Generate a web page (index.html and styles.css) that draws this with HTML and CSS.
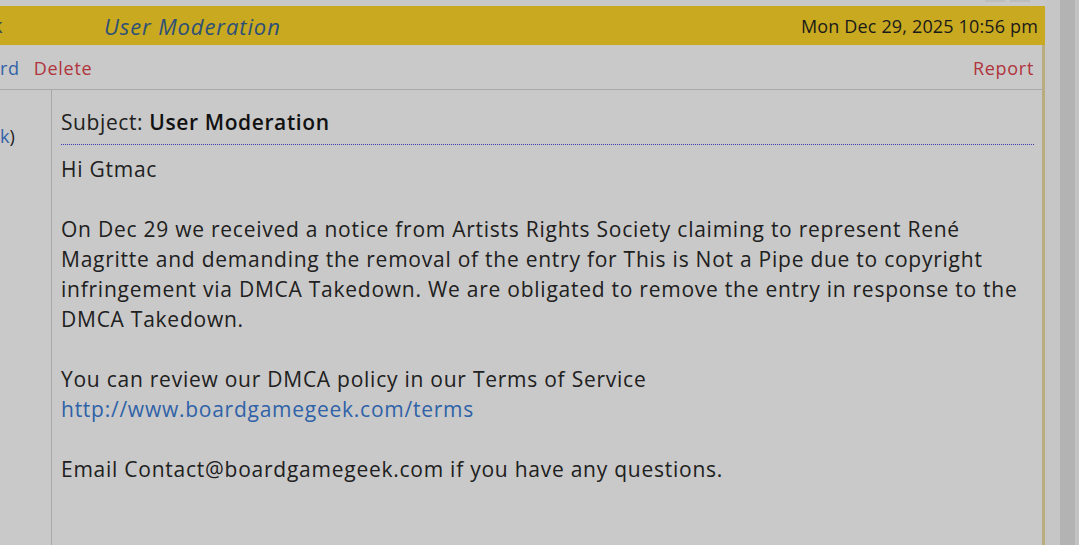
FILE: index.html
```html
<!DOCTYPE html>
<html>
<head>
<meta charset="utf-8">
<link rel="stylesheet" href="styles.css">
</head>
<body>
<div class="screen">
  <div class="post">
    <div class="topstrip">
      <span class="tab"></span><span class="tab"></span>
    </div>
    <div class="header">
      <span class="cut">k</span>
      <span class="title">User Moderation</span>
      <span class="date">Mon Dec 29, 2025 10:56 pm</span>
    </div>
    <div class="actions">
      <span class="link blue">rd</span>
      <span class="link red">Delete</span>
      <span class="spacer"></span>
      <span class="link red">Report</span>
    </div>
    <div class="body-row">
      <div class="side"><span class="blue">k</span>)</div>
      <div class="content">
        <div class="subject">Subject: <b>User Moderation</b></div>
        <div class="message">
          <p>Hi Gtmac</p>
          <p>On Dec 29 we received a notice from Artists Rights Society claiming to represent René<br>Magritte and demanding the removal of the entry for This is Not a Pipe due to copyright<br>infringement via DMCA Takedown. We are obligated to remove the entry in response to the<br>DMCA Takedown.</p>
          <p>You can review our DMCA policy in our Terms of Service<br><a class="url" href="#">http://www.boardgamegeek.com/terms</a></p>
          <p>Email Contact@boardgamegeek.com if you have any questions.</p>
        </div>
      </div>
    </div>
  </div>
  <div class="gutter-light"></div>
  <div class="gutter-dark"></div>
  <div class="gutter-end"></div>
</div>
</body>
</html>
```
FILE: styles.css
```css
html, body {
  margin: 0;
  padding: 0;
  height: 100%;
  overflow: hidden;
}
body {
  background: #c9c9c9;
  font-family: "Open Sans", "Noto Sans", sans-serif;
  color: #202020;
}
.screen {
  display: flex;
  height: 545px;
}
.post {
  width: 1045px;
  flex: none;
  display: flex;
  flex-direction: column;
}
.topstrip {
  height: 6px;
  background: #c8c8c8;
  display: flex;
  justify-content: flex-end;
  gap: 5px;
  padding-right: 15px;
}
.tab {
  width: 20px;
  height: 2px;
  background: #bdbdbd;
}
.header {
  height: 39px;
  background: #c9a920;
  display: flex;
  align-items: center;
  padding-right: 7px;
}
.cut {
  font-size: 20px;
  color: #3a4a5a;
  margin-left: -8px;
  width: 112px;
}
.title {
  font-style: italic;
  font-size: 22px;
  letter-spacing: 0.9px;
  color: #2d5077;
  flex: 1;
}
.date {
  font-size: 18px;
  letter-spacing: 0.15px;
  color: #1a1a1a;
}
.actions {
  height: 43px;
  display: flex;
  align-items: center;
  gap: 14px;
  padding-top: 1px;
  padding-right: 8px;
  border-right: 3px solid #b9ad7e;
  border-bottom: 1px solid #a9a9a9;
  font-size: 18px;
  letter-spacing: 0.7px;
}
.actions .spacer { flex: 1; }
.blue { color: #2f62a8; }
.red { color: #b0343c; }
.link { text-decoration: none; }
.body-row {
  flex: 1;
  display: flex;
  border-right: 3px solid #b9ad7e;
}
.side {
  width: 52px;
  flex: none;
  border-right: 1px solid #a8a8a8;
  font-size: 18px;
  padding-top: 34px;
  box-sizing: border-box;
  color: #222;
}
.content {
  flex: 1;
  padding: 17px 8px 0 9px;
}
.subject {
  font-size: 21px;
  line-height: 30px;
  letter-spacing: 0.6px;
  padding-bottom: 7px;
  border-bottom: 1px dotted #3a3ab8;
}
.subject b {
  font-weight: 600;
  color: #111;
}
.message {
  margin-top: 9px;
  font-size: 21px;
  line-height: 30px;
  letter-spacing: 0.75px;
}
.message p {
  margin: 0 0 30px 0;
}
.url {
  color: #2f62a8;
  text-decoration: none;
}
.gutter-light {
  width: 15px;
  background: #c6c6c6;
}
.gutter-dark {
  width: 15px;
  background: #b3b3b3;
}
.gutter-end {
  flex: 1;
  background: #c3c3c3;
}
```
